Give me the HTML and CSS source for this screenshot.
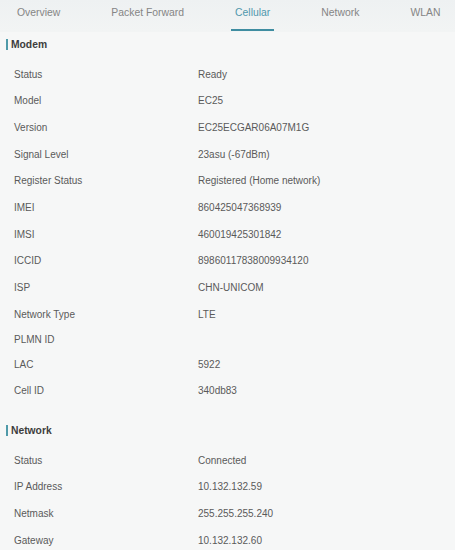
FILE: index.html
```html
<!DOCTYPE html>
<html lang="en">
<head>
<meta charset="utf-8">
<title>Cellular</title>
<link rel="stylesheet" href="styles.css">
</head>
<body>
<nav class="tabs">
  <span class="tab">Overview</span>
  <span class="tab">Packet Forward</span>
  <span class="tab active">Cellular</span>
  <span class="tab">Network</span>
  <span class="tab">WLAN</span>
</nav>
<section class="section">
  <h2 class="section-title">Modem</h2>
  <div class="row"><span class="label">Status</span><span class="value">Ready</span></div>
  <div class="row"><span class="label">Model</span><span class="value">EC25</span></div>
  <div class="row"><span class="label">Version</span><span class="value">EC25ECGAR06A07M1G</span></div>
  <div class="row"><span class="label">Signal Level</span><span class="value">23asu (-67dBm)</span></div>
  <div class="row"><span class="label">Register Status</span><span class="value">Registered (Home network)</span></div>
  <div class="row"><span class="label">IMEI</span><span class="value">860425047368939</span></div>
  <div class="row"><span class="label">IMSI</span><span class="value">460019425301842</span></div>
  <div class="row"><span class="label">ICCID</span><span class="value">89860117838009934120</span></div>
  <div class="row"><span class="label">ISP</span><span class="value">CHN-UNICOM</span></div>
  <div class="row"><span class="label">Network Type</span><span class="value">LTE</span></div>
  <div class="row row-empty"><span class="label">PLMN ID</span><span class="value"></span></div>
  <div class="row"><span class="label">LAC</span><span class="value">5922</span></div>
  <div class="row"><span class="label">Cell ID</span><span class="value">340db83</span></div>
</section>
<section class="section section-next">
  <h2 class="section-title">Network</h2>
  <div class="row"><span class="label">Status</span><span class="value">Connected</span></div>
  <div class="row"><span class="label">IP Address</span><span class="value">10.132.132.59</span></div>
  <div class="row"><span class="label">Netmask</span><span class="value">255.255.255.240</span></div>
  <div class="row"><span class="label">Gateway</span><span class="value">10.132.132.60</span></div>
</section>
</body>
</html>
```
FILE: styles.css
```css
html, body {
  margin: 0;
  padding: 0;
}
body {
  background: #f6f7f7;
  font-family: "Liberation Sans", Arial, sans-serif;
  font-size: 10px;
  color: #5a5a5a;
  height: 550px;
  overflow: hidden;
}
.tabs {
  display: flex;
  gap: 43px;
  height: 32px;
  padding-left: 13px;
  background: linear-gradient(#eef1f2, #f2f4f4);
  box-sizing: border-box;
}
.tab {
  display: block;
  padding: 7px 4px 10px;
  line-height: 12px;
  height: 31px;
  box-sizing: border-box;
  font-size: 10.4px;
  color: #858585;
  border-bottom: 2px solid transparent;
}
.tab.active {
  color: #4f98ad;
  border-bottom-color: #3f8da1;
}
.section-title {
  display: flex;
  align-items: center;
  gap: 3px;
  margin: 2px 0 6.8px;
  padding-left: 6px;
  height: 20px;
  font-size: 10.3px;
  font-weight: bold;
  color: #3d3d3d;
}
.section-title::before {
  content: "";
  width: 2px;
  height: 11px;
  background: #4f9aa9;
}
.section-next .section-title {
  margin-top: 16px;
}
.row {
  display: flex;
  align-items: center;
  height: 26.7px;
  padding-left: 14px;
}
.row-empty {
  height: 23px;
}
.label {
  width: 184px;
  flex: none;
}
.value {
  flex: 1;
}
```
